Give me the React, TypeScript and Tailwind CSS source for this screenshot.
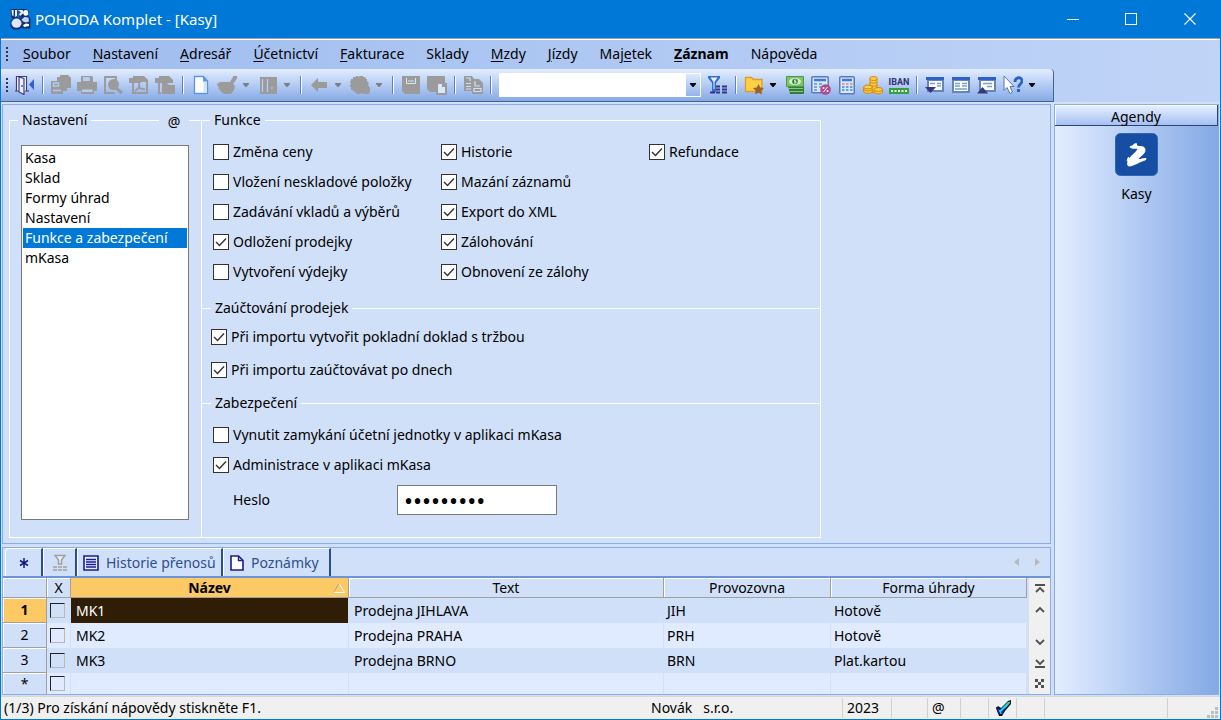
import { useState, type ReactNode } from 'react'

const menuItems = [
  { pre: '', key: 'S', post: 'oubor' },
  { pre: '', key: 'N', post: 'astavení' },
  { pre: '', key: 'A', post: 'dresář' },
  { pre: '', key: 'Ú', post: 'četnictví' },
  { pre: '', key: 'F', post: 'akturace' },
  { pre: 'Sk', key: 'l', post: 'ady' },
  { pre: '', key: 'M', post: 'zdy' },
  { pre: '', key: 'J', post: 'ízdy' },
  { pre: 'Maj', key: 'e', post: 'tek' },
  { pre: '', key: 'Z', post: 'áznam', bold: true },
  { pre: 'Náp', key: 'o', post: 'věda' },
]

const pages = ['Kasa', 'Sklad', 'Formy úhrad', 'Nastavení', 'Funkce a zabezpečení', 'mKasa']

const functionColumns = [
  [
    { label: 'Změna ceny', on: false },
    { label: 'Vložení neskladové položky', on: false },
    { label: 'Zadávání vkladů a výběrů', on: false },
    { label: 'Odložení prodejky', on: true },
    { label: 'Vytvoření výdejky', on: false },
  ],
  [
    { label: 'Historie', on: true },
    { label: 'Mazání záznamů', on: true },
    { label: 'Export do XML', on: true },
    { label: 'Zálohování', on: true },
    { label: 'Obnovení ze zálohy', on: true },
  ],
  [{ label: 'Refundace', on: true }],
]

const rows = [
  { name: 'MK1', text: 'Prodejna JIHLAVA', place: 'JIH', payment: 'Hotově' },
  { name: 'MK2', text: 'Prodejna PRAHA', place: 'PRH', payment: 'Hotově' },
  { name: 'MK3', text: 'Prodejna BRNO', place: 'BRN', payment: 'Plat.kartou' },
]

function Icon({ children }: { children: ReactNode }) {
  return (
    <svg width="20" height="20" viewBox="0 0 20 20" aria-hidden="true">
      {children}
    </svg>
  )
}

function ToolButton({ label, children }: { label: string; children: ReactNode }) {
  return (
    <button type="button" aria-label={label} className="flex h-7 w-[26px] shrink-0 items-center justify-center">
      <Icon>{children}</Icon>
    </button>
  )
}

function DropArrow({ label, dark }: { label: string; dark?: boolean }) {
  return (
    <button type="button" aria-label={label} className="flex h-7 w-[15px] shrink-0 items-center pl-[3px]">
      <svg width="6" height="4" viewBox="0 0 6 4" aria-hidden="true">
        <path d="M0 0h6v1L3.500 4h-1L0 1z" fill={dark ? '#000' : '#7d7f86'} />
      </svg>
    </button>
  )
}

function Separator() {
  return (
    <div className="flex w-[10px] shrink-0 justify-center">
      <div className="h-[18px] w-[2px] border-l border-[#5f81bd] bg-white" />
    </div>
  )
}

function Grip() {
  return (
    <div className="flex w-[3px] shrink-0 flex-col gap-[2px]" aria-hidden="true">
      {[0, 1, 2, 3].map(i => (
        <span key={i} className="h-[2px] w-[2px] bg-[#27345c]" />
      ))}
    </div>
  )
}

function SectionTitle({ title, extra }: { title: string; extra?: ReactNode }) {
  return (
    <div className="flex h-5 items-center">
      <span className="h-px w-[9px] bg-white" />
      <h2 className="px-1">{title}</h2>
      <span className="h-px flex-1 bg-white" />
      {extra}
    </div>
  )
}

function Check({ label, on }: { label: string; on: boolean }) {
  const [checked, setChecked] = useState(on)
  return (
    <label className="flex h-[30px] items-center gap-1 whitespace-nowrap">
      <span className="grid shrink-0">
        <input
          type="checkbox"
          checked={checked}
          onChange={e => setChecked(e.target.checked)}
          className="col-start-1 row-start-1 h-4 w-4 appearance-none border border-[#333] bg-white"
        />
        {checked && (
          <svg className="pointer-events-none col-start-1 row-start-1" width="16" height="16" viewBox="0 0 16 16">
            <path d="M3 8l3.500 3.500L13 4.500" fill="none" stroke="#333" strokeWidth="1.400" />
          </svg>
        )}
      </span>
      {label}
    </label>
  )
}

function TitleBar() {
  return (
    <header className="flex h-[38px] items-center bg-[#0078d7] pl-2 text-white">
      <svg width="22" height="22" viewBox="0 0 22 22" aria-hidden="true">
        <path d="M1.500 1h7v9h-6zM9 1h8l3.500 3-3 5h-7zM1.500 13l3-3.500h7l2 3v7l-4 2H4l-2.500-3zM12 9l7-2 2.500 4v9.500h-8z" fill="#16306f" />
        <path d="M2.500 2h2.200L4.500 8.500 3 7zM6 2h2v6L6 9z" fill="#e4f0ff" />
        <path d="M9.500 2h4l1.500 2.500-4 3.500-1-2 2-2-2.500-1z" fill="#e4f0ff" />
        <ellipse cx="16.800" cy="4.800" rx="2.500" ry="2.900" fill="#fff" />
        <ellipse cx="7.500" cy="15.200" rx="5" ry="4.600" fill="#d7e8ff" />
        <path d="M12.500 11.500l3-2.500 4 .5.500 4-3 1-3-1z" fill="#bcd6fb" />
        <path d="M14 17l3-1.500 3 .5v2l-5 1z" fill="#fff" />
      </svg>
      <h1 className="pl-1 text-[15px] font-normal">POHODA Komplet - [Kasy]</h1>
      <div className="ml-auto flex h-full">
        <button type="button" aria-label="Minimalizovat" className="flex w-[58px] items-center justify-center">
          <span className="h-px w-3 bg-white" />
        </button>
        <button type="button" aria-label="Maximalizovat" className="flex w-[58px] items-center justify-center">
          <span className="h-3 w-3 border border-white" />
        </button>
        <button type="button" aria-label="Zavřít" className="flex w-[60px] items-center justify-center">
          <svg width="12" height="12" viewBox="0 0 12 12">
            <path d="M0.500 0.500l11 11M11.500 0.500l-11 11" stroke="#fff" strokeWidth="1.100" />
          </svg>
        </button>
      </div>
    </header>
  )
}

function Toolbar() {
  return (
    <div className="flex h-[33px] items-center self-start rounded-tr border-r border-b border-[#48628f] bg-linear-to-b from-[#e3edff] to-[#86aae6] pr-3 pl-[5px]">
      <Grip />
      <div className="w-[3px]" />
      <ToolButton label="Zavřít agendu">
        <path d="M1.500 16V1.500H11.500V16" fill="#fff" stroke="#3b3b86" strokeWidth="1.200" />
        <path d="M4 2l5 1.500V19.500L4 17z" fill="#e9eefb" stroke="#3b3b86" strokeWidth="1.200" />
        <path d="M7 10v2" stroke="#3b3b86" strokeWidth="1.200" />
        <path d="M0 16h4M10 16h4" stroke="#3b3b86" strokeWidth="1.200" />
        <path d="M19 4v11l-5-5.500z" fill="#2f62cc" />
      </ToolButton>
      <Separator />
      <ToolButton label="Tiskové sestavy">
        <path d="M9 0h8l3 3v10h-4v3h-4v3H0V6h6V2h3z" fill="#9b9b9b" />
        <path d="M2.500 8h5v3h-5zM2 15.500h8" fill="none" stroke="#b4cbf1" strokeWidth="1.400" />
      </ToolButton>
      <ToolButton label="Tisk">
        <path d="M4 1h10l2 2v4h4v9h-3v3H4v-3H0V7h4z" fill="#9b9b9b" />
        <path d="M6 2h7v4H6zM5 14.500h10.500v2.500H5z" fill="#b7ccf2" />
        <path d="M12.500 1h3v3h-3z" fill="#9b9b9b" />
      </ToolButton>
      <ToolButton label="Náhled">
        <path d="M13 5V2H2v16h10" fill="none" stroke="#9b9b9b" strokeWidth="2" />
        <circle cx="10.500" cy="9.500" r="5.500" fill="#9b9b9b" />
        <path d="M13.500 13.500l5.500 4.500" stroke="#9b9b9b" strokeWidth="3" />
      </ToolButton>
      <ToolButton label="Export do PDF">
        <path d="M4 1h11l4 4v14H3V8H0V3h4zM5 8v9h12V7h-5v1z" fill="#9b9b9b" fillRule="evenodd" />
        <path d="M10 8c1 4 0 5-4 8M9.500 12c2 2 4 2.500 6.500 2" fill="none" stroke="#9b9b9b" strokeWidth="1.800" />
      </ToolButton>
      <ToolButton label="Odeslat">
        <path d="M4 1h10l4 4v3H6v11H3V8H0V3h4z" fill="#9b9b9b" />
        <path d="M5 17V8h7v1.500H6.500V17z" fill="#b7ccf2" />
        <path d="M7 8h5l2 2h6v9H7z" fill="#9b9b9b" />
      </ToolButton>
      <Separator />
      <ToolButton label="Nový záznam">
        <path d="M3.500 1.500h9l4 4.500v12.500h-13z" fill="#fff" stroke="#5b93e6" strokeWidth="1.300" />
        <path d="M12.500 7h3.500v11h-3.500z" fill="#cfe6f8" />
        <path d="M12 1.500v5h4.500z" fill="#5b93e6" />
      </ToolButton>
      <ToolButton label="Vystavit">
        <path d="M0 9l3-2h10l3-5V1h4v3l-1 1-3 4 2 2-1 4-3 4H7l-4-3v-1l-2-2 1-1-2-2z" fill="#9b9b9b" />
      </ToolButton>
      <DropArrow label="Možnosti vystavení" />
      <ToolButton label="Sloupce">
        <path d="M2 2h17v17H2z" fill="#9b9b9b" />
        <path d="M4.500 4v13M9.500 4v13" stroke="#bcd0f2" strokeWidth="1.200" />
        <path d="M13 13h2" stroke="#bcd0f2" />
      </ToolButton>
      <DropArrow label="Možnosti sloupců" />
      <Separator />
      <ToolButton label="Zpět">
        <path d="M2 10l7-7v4h9v6H9v4z" fill="#9b9b9b" />
      </ToolButton>
      <DropArrow label="Historie zpět" />
      <ToolButton label="Operace">
        <path
          d="M6 1h2v1l2-1h3v1h2l1 2h1v2l2 2-1 2 2 3v3l-1 3h-6l-1-1-2 1H6v-2H4l-1-2H1v-3H0v-2l1-1-1-2 1-2V4h2V2h3z"
          fill="#9b9b9b"
        />
      </ToolButton>
      <DropArrow label="Možnosti operace" />
      <Separator />
      <ToolButton label="Uložit">
        <path d="M1 1h18v18H4l-3-3z" fill="#9b9b9b" />
        <path d="M5.500 3v5.500h9V3M7 6h6" fill="none" stroke="#dbe6fa" />
      </ToolButton>
      <ToolButton label="Uložit kopii">
        <path d="M0 1h18v7h2v12H9v-3H3l-3-3z" fill="#9b9b9b" />
        <path d="M11 9h4v3h3v6h-7z" fill="#dbe6fa" />
      </ToolButton>
      <Separator />
      <ToolButton label="Kopírovat">
        <path d="M1 1h8l2 3h5l4 4v11H9v-3H1z" fill="#9b9b9b" />
        <path d="M3 3h4v3M3 8.500h5M3 11.500h5M3 14h5M12 6v5h5M11 13.500h7v3h-7z" fill="none" stroke="#d0dff8" strokeWidth="1.200" />
      </ToolButton>
      <Separator />
      <div className="ml-[3px] flex h-6 w-[202px] items-stretch bg-white">
        <input type="text" aria-label="Hledat" className="w-[186px] px-1 outline-none" />
        <button
          type="button"
          aria-label="Předchozí hledání"
          className="flex w-4 items-center justify-center border border-white bg-linear-to-b from-[#dde9ff] to-[#93b3ea]"
        >
          <svg width="6" height="4" viewBox="0 0 6 4">
            <path d="M0 0h6v1L3.500 4h-1L0 1z" fill="#000" />
          </svg>
        </button>
      </div>
      <div className="w-1" />
      <ToolButton label="Filtr">
        <path d="M0 1h12v2L8 8v9H4V8L0 3z" fill="#2f6fd0" />
        <path d="M2.500 2.500h7L6.500 7v7h-1V7z" fill="#e7f1ff" />
        <path d="M2 17.500h5M8 11.500h4M14 11.500h5M8 14.500h4M14 14.500h5M8 17.500h4M14 17.500h5" stroke="#343484" strokeWidth="2" />
      </ToolButton>
      <Separator />
      <ToolButton label="Oblíbené">
        <path d="M1.500 16.500v-14h6l2 2h8.500v12z" fill="#fdd043" stroke="#e09b28" strokeWidth="1.300" />
        <path d="M14.500 9l1.800 3.500 3.700.5-2.700 2.700.7 3.800-3.500-1.800L11 19.500l.7-3.800L9 13l3.700-.5z" fill="#9a6132" />
      </ToolButton>
      <DropArrow label="Možnosti oblíbených" dark />
      <ToolButton label="Pokladna">
        <path d="M2 8h17v11H5z" fill="#347d3e" />
        <path d="M3 13.500h15M4 16.500h14" stroke="#8cc97c" />
        <path d="M1.500 1.500h17v10h-17z" fill="#7cc36c" stroke="#4a9a4c" />
        <ellipse cx="10" cy="6.500" rx="6" ry="3.500" fill="#d5f0c5" />
        <circle cx="10" cy="6.500" r="2.800" fill="#347d3e" />
        <path d="M11 5H9.500v1.500h1.500V8H9" fill="none" stroke="#d5f0c5" />
      </ToolButton>
      <ToolButton label="Výpočet DPH">
        <rect x="0.750" y="1.750" width="16.500" height="16" rx="1" fill="#d6e6fb" stroke="#5b7bb8" strokeWidth="1.500" />
        <path d="M3 5h12" stroke="#4477cf" strokeWidth="2.500" />
        <path d="M3 9h3M8 9h3M3 12h3M8 12h2M3 15h3" stroke="#5b93d8" strokeWidth="1.500" />
        <circle cx="14.500" cy="14.500" r="5.300" fill="#b04a8c" />
        <path d="M12.500 17l4-5" stroke="#fff" />
        <circle cx="12.500" cy="13" r="1" fill="#fff" />
        <circle cx="16.500" cy="16" r="1" fill="#fff" />
      </ToolButton>
      <ToolButton label="Kalkulačka">
        <rect x="2.750" y="1.750" width="14.500" height="17" rx="1" fill="#d6e6fb" stroke="#5b7bb8" strokeWidth="1.500" />
        <path d="M5 5h10" stroke="#4477cf" strokeWidth="2.500" />
        <path d="M5 9h2.500M9 9h2.500M13 9h2.500" stroke="#e08575" strokeWidth="1.600" />
        <path d="M5 12h2.500M9 12h2.500M13 12h2.500M5 15h2.500M9 15h2.500M13 15h2.500" stroke="#5fa2e4" strokeWidth="1.800" />
      </ToolButton>
      <ToolButton label="Měny">
        <g fill="#fdcf3f" stroke="#cf8516">
          <path d="M7 3.500v13c2 1.500 5 1.500 7 0v-13z" />
          <ellipse cx="10.500" cy="3.500" rx="3.800" ry="2" />
          <path d="M7 7c2 1.500 5 1.500 7 0M7 10c2 1.500 5 1.500 7 0" />
          <path d="M0.700 12v5c2 1.800 7 1.800 8.500 0v-5z" />
          <ellipse cx="5" cy="12" rx="4.300" ry="2" />
          <path d="M0.700 14.500c2 1.800 7 1.800 8.500 0" />
          <path d="M11 14.500v3c2 1.800 7 1.800 8.500 0v-3z" />
          <ellipse cx="15.300" cy="14.500" rx="4.200" ry="2" />
        </g>
      </ToolButton>
      <button
        type="button"
        aria-label="IBAN"
        className="flex h-7 w-[26px] shrink-0 flex-col items-center justify-center font-['Liberation_Sans_Narrow','Roboto',sans-serif] text-[9px] leading-[12px] font-bold text-[#32326f]"
      >
        <span>IBAN</span>
        <svg width="20" height="6" viewBox="0 0 20 6">
          <path d="M0 0h20v6H0z" fill="#33a13e" />
          <path d="M2 2h2v2H2zM5.500 2h2v2h-2zM9 2h2v2H9zM12.500 2h2v2h-2zM16 2h2v2h-2z" fill="#fff" />
        </svg>
      </button>
      <Separator />
      <ToolButton label="Dolní okno">
        <path d="M2 2h17v15H2z" fill="#6584ba" />
        <path d="M1 2h18v3H1z" fill="#2e61c9" />
        <path d="M4 6h13v9H4z" fill="#fff" />
        <path d="M5 8.500h5M12 8.500h4M12 11h4" stroke="#74a1cf" strokeWidth="1.600" />
        <path d="M0 12h11l-5.500 6z" fill="#373680" />
      </ToolButton>
      <ToolButton label="Obě okna">
        <path d="M1 2h18v16H1z" fill="#6584ba" />
        <path d="M1 2h18v3H1z" fill="#2e61c9" />
        <path d="M3 6h14v10H3z" fill="#fff" />
        <path d="M4 8.500h5M11 8.500h5M4 11h5M11 11h5M4 14h12" stroke="#74a1cf" strokeWidth="1.500" />
      </ToolButton>
      <ToolButton label="Horní okno">
        <path d="M2 2h17v15H2z" fill="#6584ba" />
        <path d="M1 2h18v3H1z" fill="#2e61c9" />
        <path d="M4 6h13v9H4z" fill="#fff" />
        <path d="M6 8.500h9M10 11.500h5" stroke="#74a1cf" strokeWidth="1.300" />
        <path d="M0 18.500h11L5.500 12z" fill="#373680" />
      </ToolButton>
      <ToolButton label="Nápověda">
        <path d="M1 1v14.500l3-3 3 6 2.500-1.300L7 11.500h4z" fill="#fff" stroke="#5778ae" />
        <path d="M12 7c0-5.500 7-5.500 7-1 0 3-3.500 3-3.500 6.500" fill="none" stroke="#2c60c8" strokeWidth="2.800" />
        <path d="M14 14h3v3h-3z" fill="#2c60c8" />
      </ToolButton>
      <DropArrow label="Možnosti nápovědy" dark />
    </div>
  )
}

function SettingsPanel() {
  const [page, setPage] = useState('Funkce a zabezpečení')
  return (
    <main className="flex flex-1 border border-[#8aade6] px-[6px] pt-[5px] pb-[5px]">
      <section className="flex w-[192px] shrink-0 flex-col">
        <SectionTitle
          title="Nastavení"
          extra={
            <>
              <button type="button" className="w-[30px] pt-1 text-center">@</button>
              <span className="h-px w-3 bg-white" />
            </>
          }
        />
        <div className="-mt-[10px] flex flex-1 border-b border-l border-white pt-[25px] pr-3 pb-[17px] pl-[11px]">
          <ul role="listbox" aria-label="Nastavení" className="flex-1 border border-[#7a7a7a] bg-white px-px py-[2px]">
            {pages.map(p => (
              <li key={p} role="option" aria-selected={p === page}>
                <button
                  type="button"
                  onClick={() => setPage(p)}
                  className={`block h-5 w-full pl-[2px] text-left leading-5 whitespace-nowrap ${
                    p === page ? 'bg-[#0078d7] text-white' : ''
                  }`}
                >
                  {p}
                </button>
              </li>
            ))}
          </ul>
        </div>
      </section>
      <section className="flex w-[620px] shrink-0 flex-col">
        <SectionTitle title="Funkce" />
        <div className="-mt-[10px] flex flex-1 flex-col border-r border-b border-l border-white pt-[17px]">
          <div className="flex pl-[11px]">
            {functionColumns.map((column, i) => (
              <div key={i} className={i === 0 ? 'w-[228px]' : i === 1 ? 'w-[208px]' : ''}>
                {column.map(c => (
                  <Check key={c.label} label={c.label} on={c.on} />
                ))}
              </div>
            ))}
          </div>
          <div className="pt-[11px]">
            <SectionTitle title="Zaúčtování prodejek" />
          </div>
          <div className="flex flex-col gap-[3px] pt-1 pl-[9px]">
            <Check label="Při importu vytvořit pokladní doklad s tržbou" on />
            <Check label="Při importu zaúčtovávat po dnech" on />
          </div>
          <div className="pt-2">
            <SectionTitle title="Zabezpečení" />
          </div>
          <div className="pt-[7px] pl-[11px]">
            <Check label="Vynutit zamykání účetní jednotky v aplikaci mKasa" on={false} />
            <Check label="Administrace v aplikaci mKasa" on />
            <div className="flex items-center pt-[5px] pl-5">
              <label htmlFor="heslo" className="w-[164px]">
                Heslo
              </label>
              <input
                id="heslo"
                type="password"
                defaultValue="123456789"
                className="h-[30px] w-40 border border-[#7a7a7a] bg-white px-[6px] text-[24px] outline-none"
              />
            </div>
          </div>
        </div>
      </section>
    </main>
  )
}

function Tabs() {
  const tab = 'flex h-7 items-center border-t border-r-2 border-l border-t-white border-r-[#2c4f8a] border-l-white'
  return (
    <div className="flex h-[30px] items-end border-b-2 border-[#6d93d8] pl-[2px] text-[#2d4f8c]">
      <button type="button" aria-label="Nový" className={`${tab} w-[38px] justify-center rounded-tl text-[#16168a]`}>
        <svg width="10" height="10" viewBox="0 0 10 10">
          <path d="M5 0v10M1 2.500l8 5M9 2.500l-8 5" stroke="#16168a" strokeWidth="1.500" />
        </svg>
      </button>
      <button type="button" aria-label="Filtr" className={`${tab} w-[34px] justify-center`}>
        <svg width="16" height="18" viewBox="0 0 16 18">
          <path d="M3 1.500h10L9.500 6v4h-3V6z" fill="#e8eefb" stroke="#a0a0a0" strokeWidth="1.500" />
          <path d="M1 13h4M6 13h4M11 13h4M1 16h4M6 16h4M11 16h4" stroke="#a0a0a0" strokeWidth="1.600" />
        </svg>
      </button>
      <button type="button" className={`${tab} w-[146px] gap-[7px] pl-[5px]`}>
        <svg width="16" height="16" viewBox="0 0 16 16">
          <path d="M1 1h14v14H1z" fill="#e8f0ff" stroke="#1c1c8c" strokeWidth="1.600" />
          <path d="M3 4.500h10M3 7h10M3 9.500h10M3 12h10" stroke="#1c1c8c" strokeWidth="1.300" />
        </svg>
        Historie přenosů
      </button>
      <button type="button" className={`${tab} w-[108px] gap-[7px] pl-[6px]`}>
        <svg width="14" height="16" viewBox="0 0 14 16">
          <path d="M1 1h7.500L13 5.500V15H1z" fill="#fff" stroke="#1c1c8c" strokeWidth="1.600" />
          <path d="M8.500 1v4.500H13" fill="none" stroke="#1c1c8c" strokeWidth="1.400" />
        </svg>
        Poznámky
      </button>
      <div className="ml-auto flex h-7 items-center gap-[14px] pr-[10px]">
        <button type="button" aria-label="Předchozí">
          <svg width="6" height="8" viewBox="0 0 6 8">
            <path d="M5 0v8L0 4z" fill="#b4b9c4" />
          </svg>
        </button>
        <button type="button" aria-label="Další">
          <svg width="6" height="8" viewBox="0 0 6 8">
            <path d="M1 0v8l5-4z" fill="#b4b9c4" />
          </svg>
        </button>
      </div>
    </div>
  )
}

function ScrollButton({ label, d }: { label: string; d: string }) {
  return (
    <button type="button" aria-label={label} className="flex h-[21px] items-center justify-center">
      <svg width="10" height="10" viewBox="0 0 10 10">
        <path d={d} fill="none" stroke="#505050" strokeWidth="1.800" />
      </svg>
    </button>
  )
}

function Grid() {
  const head = 'h-5 border-r border-b border-[#a0a0a0] p-0 text-center leading-[19px] font-normal shadow-[inset_1px_1px_0_#fff]'
  const rowHead = 'border-r border-b border-[#a0a0a0] p-0 text-center font-normal shadow-[inset_1px_1px_0_#fff]'
  const cell = 'border-r border-[#d1e0f9] py-0 pr-0'
  const box =
    'block h-[15px] w-[15px] appearance-none border border-t-[#222] border-r-[#b8b8b8] border-b-[#b8b8b8] border-l-[#222]'
  return (
    <div className="flex">
      <table className="flex-1 table-fixed border-separate border-spacing-0">
        <colgroup>
          <col className="w-[44px]" />
          <col className="w-6" />
          <col className="w-[278px]" />
          <col />
          <col className="w-[167px]" />
          <col className="w-[196px]" />
        </colgroup>
        <thead>
          <tr>
            <th className={head} aria-label="Číslo" />
            <th className={head}>X</th>
            <th className="h-5 border-r border-b border-[#a0a0a0] bg-[#fdc965] p-0 leading-[19px]">
              <div className="flex items-center">
                <span className="flex-1 pl-[15px] text-center font-bold">Název</span>
                <svg width="12" height="10" viewBox="0 0 12 10" className="mr-[3px]">
                  <path d="M6 0.500L0.500 9.500h11z" fill="none" stroke="#fff" />
                  <path d="M6 0.500L0.500 9.500" stroke="#b8935a" />
                </svg>
              </div>
            </th>
            <th className={head}>Text</th>
            <th className={head}>Provozovna</th>
            <th className={head}>Forma úhrady</th>
          </tr>
        </thead>
        <tbody>
          {rows.map((r, i) => (
            <tr key={r.name} className={`h-[25px] ${i % 2 ? 'bg-[#e0ebff]' : 'bg-[#d1e0f9]'}`}>
              <th className={`${rowHead} ${i === 0 ? 'bg-[#fdc965] font-bold!' : 'bg-[#d1e0f9]'}`}>{i + 1}</th>
              <td className={`${cell} pl-[3px]`}>
                <input type="checkbox" aria-label={`Vybrat ${r.name}`} className={box} />
              </td>
              <td className={`${cell} pl-[5px] ${i === 0 ? 'bg-[#2f1d06] text-white' : ''}`}>{r.name}</td>
              <td className={`${cell} pl-[5px]`}>{r.text}</td>
              <td className={`${cell} pl-[3px]`}>{r.place}</td>
              <td className={`${cell} pl-[3px]`}>{r.payment}</td>
            </tr>
          ))}
          <tr className="h-[21px] bg-[#e0ebff]">
            <th className="border-r border-[#a0a0a0] bg-[#d1e0f9] p-0 text-center font-normal shadow-[inset_1px_1px_0_#fff]">*</th>
            <td className={`${cell} pl-[3px]`}>
              <input type="checkbox" aria-label="Vybrat nový záznam" className={box} />
            </td>
            <td className={cell} />
            <td className={cell} />
            <td className={cell} />
            <td className={cell} />
          </tr>
        </tbody>
      </table>
      <div className="ml-[2px] flex w-[21px] shrink-0 flex-col bg-[#f0f0f0]">
        <ScrollButton label="Na začátek" d="M0 1h10M1 8l4-4 4 4" />
        <ScrollButton label="Nahoru" d="M1 7l4-4 4 4" />
        <div className="flex-1" />
        <ScrollButton label="Dolů" d="M1 3l4 4 4-4" />
        <ScrollButton label="Na konec" d="M0 9h10M1 2l4 4 4-4" />
        <button type="button" aria-label="Lupa" className="flex h-[21px] items-center justify-center">
          <svg width="9" height="9" viewBox="0 0 9 9">
            <path d="M0 0h3v3H0zM6 0h3v3H6zM0 6h3v3H0zM6 6h3v3H6zM3 3h3v3H3z" fill="#505050" />
          </svg>
        </button>
      </div>
    </div>
  )
}

function Sidebar() {
  return (
    <aside className="flex w-[165px] shrink-0 flex-col border border-[#8aade6] bg-linear-to-r from-[#e3edff] to-[#84a9e5]">
      <h2 className="h-[21px] border-r border-b border-[#2c4577] bg-linear-to-b from-[#e9f1ff] to-[#a5c1f1] pt-[2px] text-center leading-5 shadow-[inset_1px_1px_0_#fff]">
        Agendy
      </h2>
      <button type="button" className="flex flex-col items-center gap-2 pt-[7px]">
        <svg width="43" height="43" viewBox="0 0 43 43" aria-hidden="true">
          <rect x="0.500" y="0.500" width="42" height="42" rx="5" fill="#164ea3" stroke="#2e65b8" />
          <path
            d="M14.500 14c0-1 3-1 5-3.500l2-.5c1 2 0 2.500 2 3 4-.5 7 1 7 4 0 4-5 6-7 9 2 .5 4-1.500 7.500-1 1 1 0 2-1 2.500-6 1.500-9 5-15.500 6-3 0-2-4-2-5.500 3-6 7.500-7.500 10-12-2-1-4.500 1-8-2z"
            fill="#fff"
          />
          <path d="M12 28l1.500-4-.5 8" fill="none" stroke="#fff" />
        </svg>
        <span>Kasy</span>
      </button>
    </aside>
  )
}

function StatusBar() {
  const cell = 'flex h-5 shrink-0 items-center border-l border-[#d0d0d0]'
  return (
    <footer className="flex h-[23px] items-center border-t border-[#d7d7d7] bg-[#f0f0f0]">
      <span className="flex-1 pl-[3px] whitespace-nowrap">(1/3) Pro získání nápovědy stiskněte F1.</span>
      <span className="w-[191px] whitespace-pre">Novák   s.r.o.</span>
      <span className={`${cell} w-[49px] pl-1`}>2023</span>
      <span className={`${cell} w-9`} />
      <span className={`${cell} w-[33px] pl-1`}>@</span>
      <span className={`${cell} w-7`} />
      <span className={`${cell} w-7 pl-[6px]`}>
        <svg width="17" height="18" viewBox="0 0 17 18" aria-hidden="true">
          <path d="M1 9l2-2 3 2 7-7 3-1v4l-6 7-3 5H4z" fill="#111" />
          <path d="M2 10l3 1 8-8h2v1l-6 7-2 4H5z" fill="#1cd8f0" />
          <path d="M1 8h2l1 4 2 4-3-2zM6 13l5-5-4 7z" fill="#1515b0" />
        </svg>
      </span>
      <span className={`${cell} w-7`} />
      <span className={`${cell} w-[123px]`} />
      <span className={`${cell} w-[53px] items-end! justify-end pr-[2px]`}>
        <svg width="11" height="11" viewBox="0 0 11 11" aria-hidden="true">
          <path d="M8 0h3v3H8zM4 4h3v3H4zM8 4h3v3H8zM0 8h3v3H0zM4 8h3v3H4zM8 8h3v3H8z" fill="#bdbdbd" />
        </svg>
      </span>
    </footer>
  )
}

export default function App() {
  return (
    <div className="flex min-h-screen flex-col border border-t-0 border-[#0078d7] bg-[#d1e0f9] font-['Noto_Sans','Open_Sans',sans-serif] text-[14px] leading-5 text-black">
      <TitleBar />
      <div className="flex flex-col border-t border-[#a0a0a0] bg-linear-to-r from-[#9ebcef] to-[#c0d4f7]">
        <nav className="flex h-[30px] items-center border-t border-white pb-[2px] pl-[5px]">
          <Grip />
          <div className="flex pl-[3px]">
            {menuItems.map(m => (
              <a key={m.post} href="#" className={`px-[11px] ${m.bold ? 'font-bold' : ''}`}>
                {m.pre}
                <span className="underline underline-offset-2">{m.key}</span>
                {m.post}
              </a>
            ))}
          </div>
        </nav>
        <Toolbar />
      </div>
      <div className="flex flex-1 gap-[3px] px-px pt-[2px] pb-px">
        <div className="flex min-w-0 flex-1 flex-col gap-[3px]">
          <SettingsPanel />
          <section className="border border-[#8aade6]">
            <Tabs />
            <Grid />
          </section>
        </div>
        <Sidebar />
      </div>
      <StatusBar />
    </div>
  )
}
